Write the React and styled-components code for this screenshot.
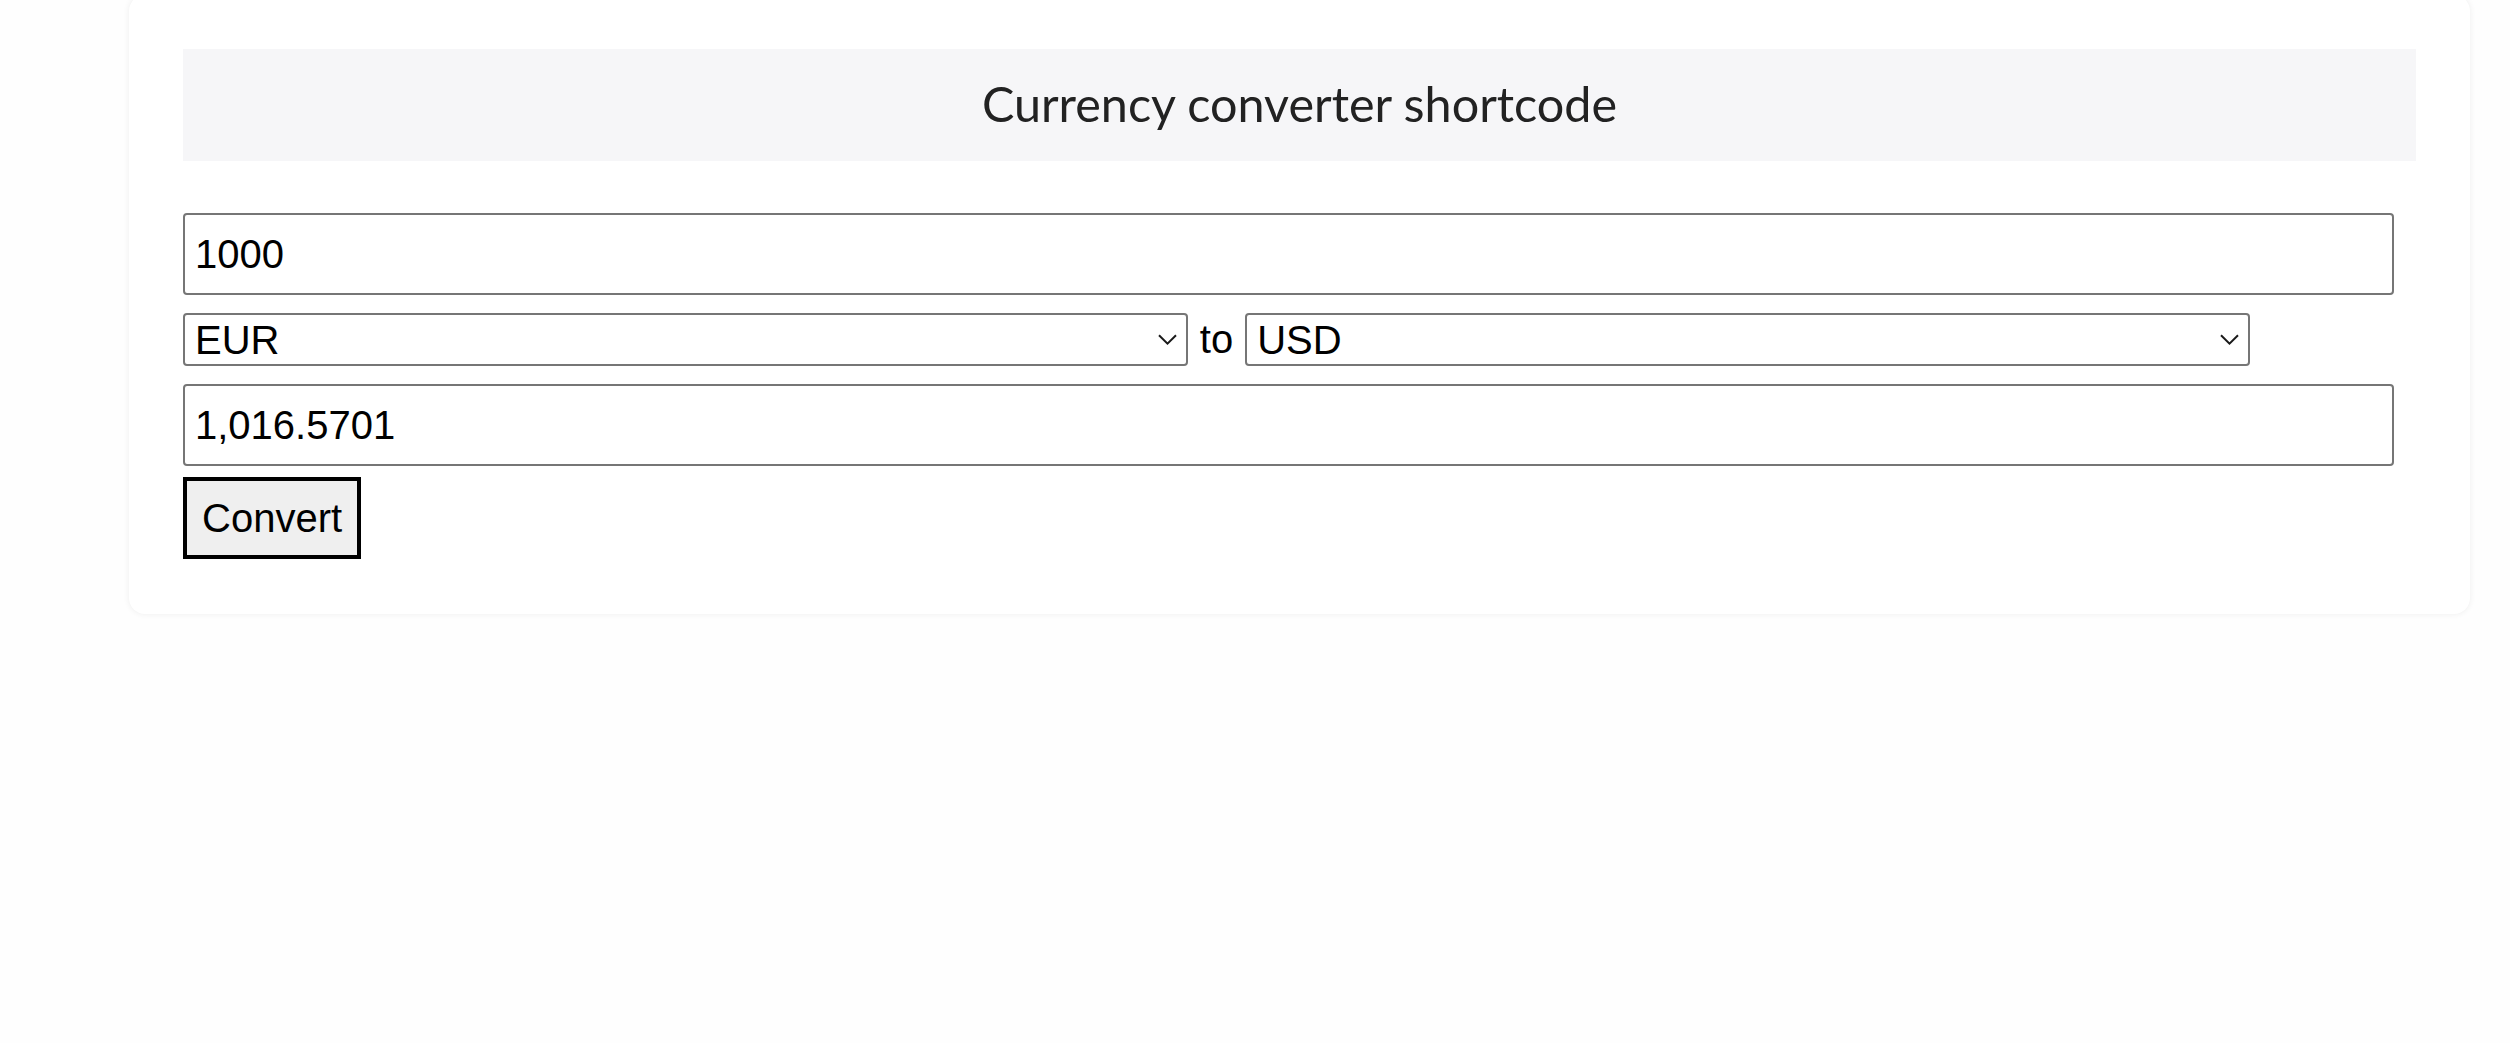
import React, { useState } from 'react'
import styled, { createGlobalStyle } from 'styled-components'

const GlobalStyle = createGlobalStyle`
    html, body {
        margin: 0;
        padding: 0;
        background: #fefefe;
        overflow: hidden;
    }
    * {
        box-sizing: border-box;
    }
`

const Page = styled.div`
    width: 2510px;
    height: 1043px;
    padding-left: 129px;
`

const Card = styled.div`
    width: 2341px;
    margin-top: -5px;
    padding: 54px 54px 55px;
    background: #fff;
    border-radius: 16px;
    box-shadow: 0 0 6px rgba(0, 0, 0, 0.07);
`

const Header = styled.div`
    height: 112px;
    margin-bottom: 52px;
    padding-bottom: 4px;
    background: #f6f6f8;
    display: flex;
    justify-content: center;
    align-items: center;
`

const Title = styled.h2`
    margin: 0;
    font-family: Lato, "Open Sans", sans-serif;
    font-weight: 400;
    font-size: 48.5px;
    color: #222;
`

const TextInput = styled.input`
    display: block;
    width: 99%;
    height: 82px;
    margin: 0 0 ${props => props.gap}px 0;
    padding: 0 10px;
    border: 2px solid #767676;
    border-radius: 4px;
    font-family: "Liberation Sans", Arial, sans-serif;
    font-size: 40px;
    color: #000;
    background: #fff;
    outline: none;
`

const Row = styled.div`
    display: flex;
    align-items: center;
    gap: 12px;
    height: 53px;
    margin-bottom: 18px;
`

const SelectWrap = styled.div`
    position: relative;
    width: 45%;
    height: 53px;
`

const Select = styled.select`
    width: 100%;
    height: 100%;
    padding: 0 40px 0 10px;
    border: 2px solid #767676;
    border-radius: 4px;
    appearance: none;
    background: #fff;
    font-family: "Liberation Sans", Arial, sans-serif;
    font-size: 40px;
    color: #000;
    outline: none;
`

const Chevron = styled.svg`
    position: absolute;
    right: 11px;
    top: 21px;
    width: 19px;
    height: 11px;
    pointer-events: none;
`

const To = styled.span`
    font-family: "Liberation Sans", Arial, sans-serif;
    font-size: 40px;
    color: #000;
`

const Button = styled.button`
    display: block;
    width: 178px;
    height: 82px;
    padding: 0 15px;
    border: 4px solid #000;
    border-radius: 0;
    background: #efefef;
    font-family: "Liberation Sans", Arial, sans-serif;
    font-size: 40px;
    color: #000;
    cursor: pointer;
`

const currencies = ['EUR', 'USD', 'GBP', 'JPY', 'CHF', 'CAD', 'AUD']

const CurrencySelect = ({ value, onChange }) => (
    <SelectWrap>
        <Select value={value} onChange={e => onChange(e.target.value)}>
            {currencies.map(c => <option key={c} value={c}>{c}</option>)}
        </Select>
        <Chevron viewBox="0 0 19 11">
            <path d="M1 1.2 L9.5 9.6 L18 1.2" fill="none" stroke="#1a1a1a" strokeWidth="2" />
        </Chevron>
    </SelectWrap>
)

const App = () => {
    const [amount, setAmount] = useState('1000')
    const [from, setFrom] = useState('EUR')
    const [to, setTo] = useState('USD')

    return (
        <>
            <GlobalStyle />
            <Page>
                <Card>
                    <Header>
                        <Title>Currency converter shortcode</Title>
                    </Header>
                    <TextInput gap={18} value={amount} onChange={e => setAmount(e.target.value)} />
                    <Row>
                        <CurrencySelect value={from} onChange={setFrom} />
                        <To>to</To>
                        <CurrencySelect value={to} onChange={setTo} />
                    </Row>
                    <TextInput gap={11} value="1,016.5701" readOnly />
                    <Button>Convert</Button>
                </Card>
            </Page>
        </>
    )
}

export default App
